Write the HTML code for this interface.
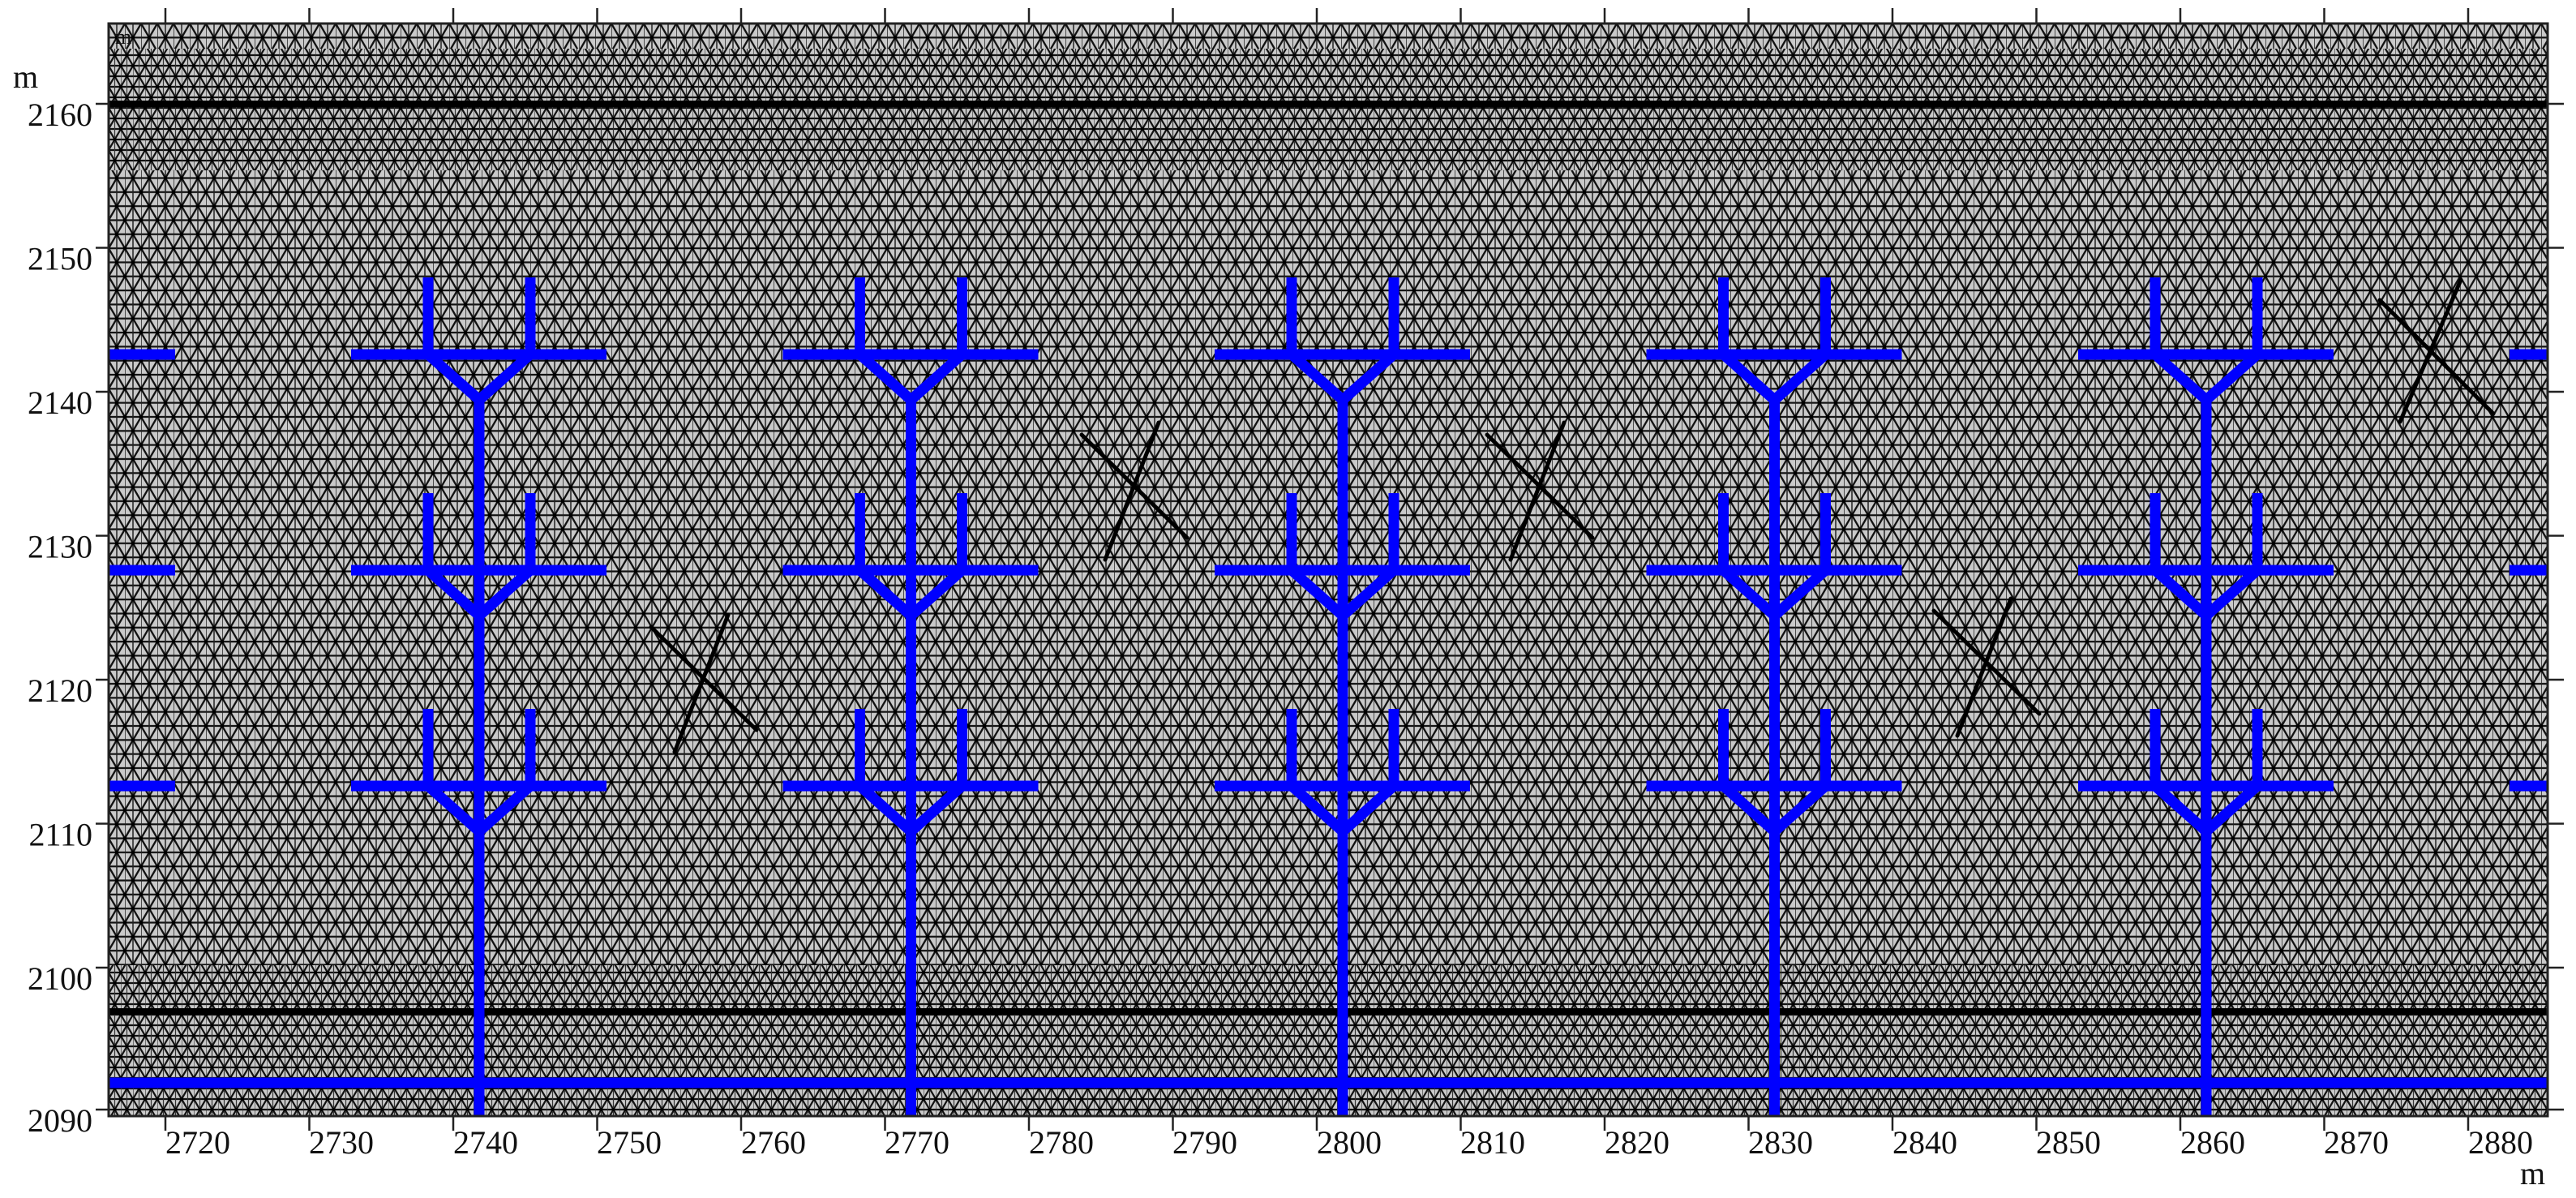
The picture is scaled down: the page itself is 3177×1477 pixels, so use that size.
<!DOCTYPE html>
<html><head><meta charset="utf-8"><style>
html,body{margin:0;padding:0;background:#fff;}
svg{display:block;}
text{font-family:"Liberation Serif",serif;fill:#111;}
</style></head><body>
<svg width="3177" height="1477" viewBox="0 0 3177 1477" xmlns="http://www.w3.org/2000/svg">
<defs>
<pattern id="m1" width="20" height="34.64" patternUnits="userSpaceOnUse" x="134" y="29">
<rect width="20" height="34.64" fill="#c9c9c9"/>
<path d="M0 0H20M0 17.32H20M0 34.64H20M0 0L10 17.32L0 34.64M20 0L10 17.32L20 34.64" stroke="#111" stroke-width="2.3" fill="none"/>
<path d="M10 0V34.64M0 0V34.64" stroke="#222" stroke-width="1.5" fill="none"/>
<circle cx="10" cy="17.32" r="2.4" fill="#000"/><circle cx="0" cy="0" r="2.4" fill="#000"/><circle cx="20" cy="0" r="2.4" fill="#000"/><circle cx="0" cy="34.64" r="2.4" fill="#000"/><circle cx="20" cy="34.64" r="2.4" fill="#000"/>
</pattern>
<pattern id="m2" width="15" height="26" patternUnits="userSpaceOnUse" x="134" y="29">
<rect width="15" height="26" fill="#c9c9c9"/>
<path d="M0 0H15M0 13H15M0 26H15M0 0L7.5 13L0 26M15 0L7.5 13L15 26" stroke="#111" stroke-width="2.2" fill="none"/>
<path d="M7.5 0V26M0 0V26" stroke="#333" stroke-width="1.2" fill="none"/>
<circle cx="7.5" cy="13" r="2" fill="#000"/><circle cx="0" cy="0" r="2" fill="#000"/><circle cx="15" cy="0" r="2" fill="#000"/><circle cx="0" cy="26" r="2" fill="#000"/><circle cx="15" cy="26" r="2" fill="#000"/>
</pattern>
<clipPath id="pc"><rect x="134" y="29" width="3008" height="1347"/></clipPath>
</defs>

<rect x="134" y="29" width="3008" height="1347" fill="url(#m1)"/>
<rect x="134" y="60" width="3008" height="150" fill="url(#m2)"/>
<rect x="134" y="1190" width="3008" height="186" fill="url(#m2)"/>

<g clip-path="url(#pc)">
<rect x="134" y="124" width="3008" height="8" fill="#000"/>
<rect x="134" y="1243" width="3008" height="8" fill="#000"/>

<g stroke="#000" stroke-width="5" stroke-linecap="round">
<path d="M803 773L933 900M898 758L832 927"/>
<path d="M1334 536L1464 663M1429 521L1363 690"/>
<path d="M1834 536L1964 663M1929 521L1863 690"/>
<path d="M2385 753L2515 880M2480 738L2414 907"/>
<path d="M2935 370L3075 510M3035 345L2960 520"/>
</g>

<g stroke="#0000ff" stroke-width="13" fill="none" stroke-linejoin="miter">
<path d="M134 1335H3142"/>
<path d="M134 437H216M134 703H216M134 969H216"/>
<path d="M3095 437H3142M3095 703H3142M3095 969H3142"/>
<g id="tr">
<path d="M591 493V1376"/>
<path d="M433 437H748M528 342V437L591 493L654 437V342"/>
<path d="M433 703H748M528 608V703L591 759L654 703V608"/>
<path d="M433 969H748M528 874V969L591 1025L654 969V874"/>
</g>
<use href="#tr" x="532.5"/>
<use href="#tr" x="1065"/>
<use href="#tr" x="1597.5"/>
<use href="#tr" x="2130"/>
</g>
</g>

<rect x="134" y="29" width="3008" height="1347" fill="none" stroke="#222" stroke-width="3"/>
<text x="142" y="54" font-size="26">m</text>

<g stroke="#222" stroke-width="2.5">
<path d="M204 10V29M381.5 10V29M559 10V29M736.5 10V29M914 10V29M1091.5 10V29M1269 10V29M1446.5 10V29M1624 10V29M1801.5 10V29M1979 10V29M2156.5 10V29M2334 10V29M2511.5 10V29M2689 10V29M2866.5 10V29M3044 10V29"/>
<path d="M204 1376V1394M381.5 1376V1394M559 1376V1394M736.5 1376V1394M914 1376V1394M1091.5 1376V1394M1269 1376V1394M1446.5 1376V1394M1624 1376V1394M1801.5 1376V1394M1979 1376V1394M2156.5 1376V1394M2334 1376V1394M2511.5 1376V1394M2689 1376V1394M2866.5 1376V1394M3044 1376V1394"/>
<path d="M118 128H134M118 305.5H134M118 483H134M118 660.5H134M118 838H134M118 1015.5H134M118 1193H134M118 1368H134"/>
<path d="M3142 128H3162M3142 305.5H3162M3142 483H3162M3142 660.5H3162M3142 838H3162M3142 1015.5H3162M3142 1193H3162M3142 1368H3162"/>
</g>

<g font-size="40" text-anchor="end">
<text x="114" y="155">2160</text>
<text x="114" y="332.5">2150</text>
<text x="114" y="510">2140</text>
<text x="114" y="687.5">2130</text>
<text x="114" y="865">2120</text>
<text x="114" y="1042.5">2110</text>
<text x="114" y="1220">2100</text>
<text x="114" y="1395">2090</text>
</g>
<text x="16" y="108" font-size="40">m</text>
<g font-size="40">
<text x="204" y="1422">2720</text>
<text x="381" y="1422">2730</text>
<text x="559" y="1422">2740</text>
<text x="736" y="1422">2750</text>
<text x="914" y="1422">2760</text>
<text x="1091" y="1422">2770</text>
<text x="1269" y="1422">2780</text>
<text x="1446" y="1422">2790</text>
<text x="1624" y="1422">2800</text>
<text x="1801" y="1422">2810</text>
<text x="1979" y="1422">2820</text>
<text x="2156" y="1422">2830</text>
<text x="2334" y="1422">2840</text>
<text x="2511" y="1422">2850</text>
<text x="2689" y="1422">2860</text>
<text x="2866" y="1422">2870</text>
<text x="3044" y="1422">2880</text>
</g>
<text x="3108" y="1460" font-size="40">m</text>
</svg>
</body></html>
